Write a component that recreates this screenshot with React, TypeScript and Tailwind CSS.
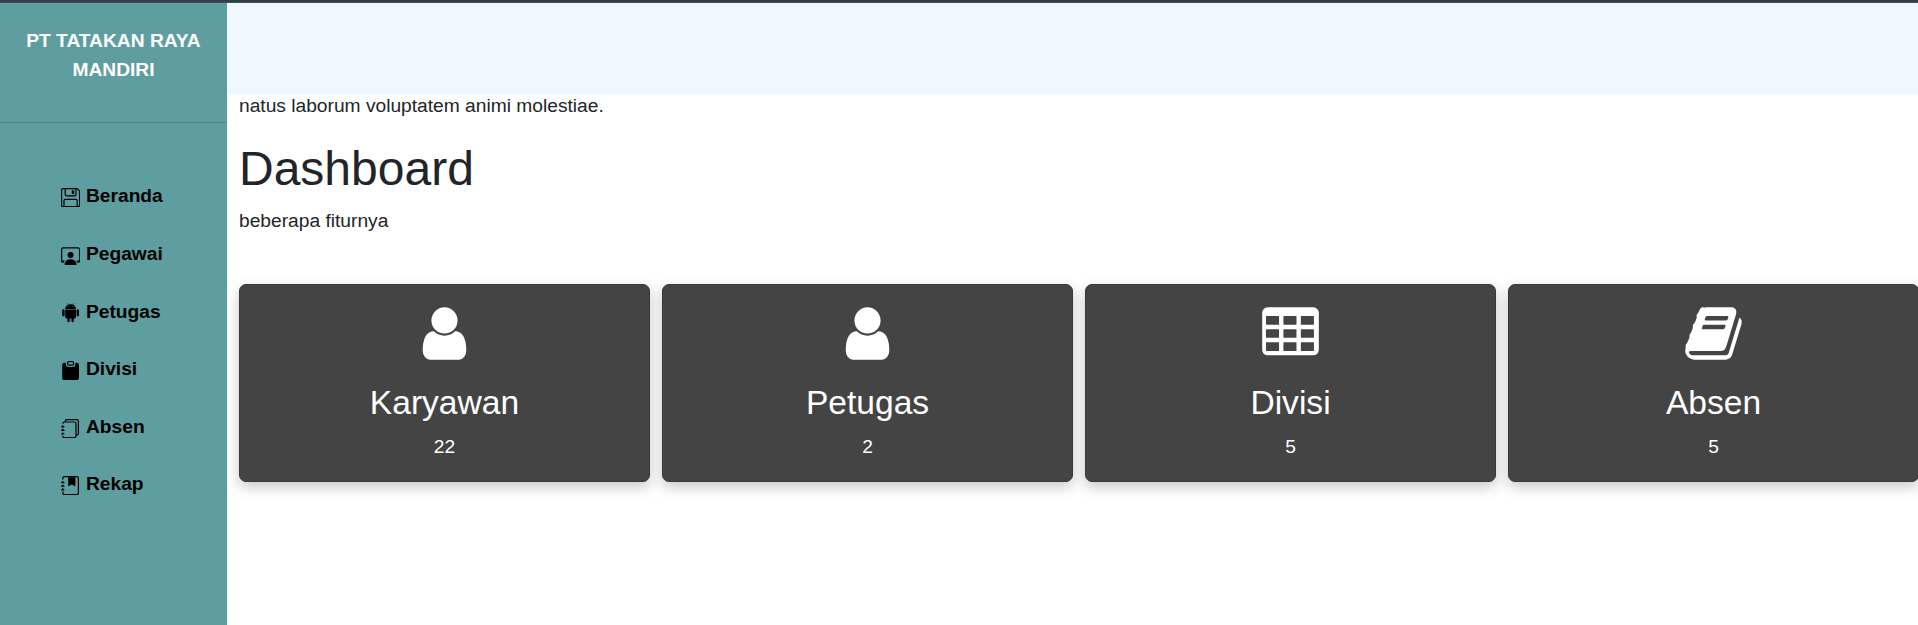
import type { ReactNode } from "react";
import {
  BsAndroid2,
  BsClipboardFill,
  BsFloppy,
  BsJournalBookmarkFill,
  BsJournals,
  BsPersonWorkspace,
} from "react-icons/bs";

const navItems = [
  { label: "Beranda", Icon: BsFloppy },
  { label: "Pegawai", Icon: BsPersonWorkspace },
  { label: "Petugas", Icon: BsAndroid2 },
  { label: "Divisi", Icon: BsClipboardFill },
  { label: "Absen", Icon: BsJournals },
  { label: "Rekap", Icon: BsJournalBookmarkFill },
];

function Glyph({ children }: { children: ReactNode }) {
  return (
    <svg viewBox="0 0 1792 1792" className="size-[61px] shrink-0 fill-white" aria-hidden="true">
      {children}
    </svg>
  );
}

function UserGlyph() {
  return (
    <Glyph>
      <path d="M1536 1399q0 109-62.5 187t-150.5 78h-854q-88 0-150.5-78t-62.5-187q0-85 8.5-160.5t31.5-152 58.5-131 94-89 134.5-34.5q131 128 313 128t313-128q76 0 134.5 34.5t94 89 58.5 131 31.5 152 8.5 160.5zm-256-887q0 159-112.5 271.5t-271.5 112.5-271.5-112.5-112.5-271.5 112.5-271.5 271.5-112.5 271.5 112.5 112.5 271.5z" />
    </Glyph>
  );
}

function TableGlyph() {
  const cell = "h352q16 0 16 16v224q0 16-16 16h-352q-16 0-16-16v-224q0-16 16-16z";
  const cells = [384, 768, 1152].flatMap((y) => [208, 720, 1232].map((x) => `M${x} ${y}${cell}`)).join("");
  return (
    <Glyph>
      <path
        fillRule="evenodd"
        d={`M1744 288v1088q0 66-47 113t-113 47h-1344q-66 0-113-47t-47-113v-1088q0-66 47-113t113-47h1344q66 0 113 47t47 113z${cells}`}
        transform="translate(-16 0)"
      />
    </Glyph>
  );
}

function BookGlyph() {
  return (
    <Glyph>
      <path d="M1703 478q40 57 18 129l-275 906q-19 64-76.5 107.5t-122.5 43.5h-923q-77 0-148.5-53.5t-99.5-131.5q-24-67-2-127 0-4 3-27t4-37q1-8-3-21.5t-3-19.5q2-11 8-21t16.5-23.5 16.5-23.5q23-38 45-91.5t30-91.5q3-10 .5-30t-.5-28q3-11 17-28t17-23q21-36 42-92t25-90q1-9-2.5-32t.5-28q4-13 22-30.5t22-22.5q19-26 42.5-84.5t27.5-96.5q1-8-3-25.5t-2-26.5q2-8 9-18t18-23 17-21q8-12 16.5-30.5t15-35 16-36 19.5-32 26.5-23.5 36-11.5 47.5 5.5l-1 3q38-9 51-9h761q74 0 114 56t18 130l-274 906q-36 119-71.5 153.5t-128.5 34.5h-869q-27 0-38 15-11 16-1 43 24 70 144 70h923q29 0 56-15.5t35-41.5l300-987q7-22 5-57 38 15 59 43zm-1064 2q-4 13 2 22.5t20 9.5h608q13 0 25.5-9.5t16.5-22.5l21-64q4-13-2-22.5t-20-9.5h-608q-13 0-25.5 9.5t-16.5 22.5zm-83 256q-4 13 2 22.5t20 9.5h608q13 0 25.5-9.5t16.5-22.5l21-64q4-13-2-22.5t-20-9.5h-608q-13 0-25.5 9.5t-16.5 22.5z" />
    </Glyph>
  );
}

const stats = [
  { label: "Karyawan", value: 22, icon: <UserGlyph /> },
  { label: "Petugas", value: 2, icon: <UserGlyph /> },
  { label: "Divisi", value: 5, icon: <TableGlyph /> },
  { label: "Absen", value: 5, icon: <BookGlyph /> },
];

export default function App() {
  return (
    <div className="flex h-[625px] w-full flex-col overflow-hidden bg-white font-['Liberation_Sans',Arial,sans-serif] text-[19.2px] leading-[28.8px] text-[#212529]">
      <div className="h-[3px] shrink-0 border-b border-[#484c50] bg-[#2f3f4a]" />
      <div className="flex min-h-0 flex-1">
        <aside className="w-[227px] shrink-0 bg-[#5f9ea0]">
          <div className="h-[120px] border-b border-[#4f8385] px-5 pt-6 text-center font-bold text-white">
            PT TATAKAN RAYA MANDIRI
          </div>
          <nav className="flex flex-col pt-[45px] pl-[61px] font-bold text-black">
            {navItems.map(({ label, Icon }) => (
              <a key={label} className="flex h-[57.6px] items-center gap-[5.8px]">
                <Icon className="mt-[2px] size-[19.2px]" />
                <span>{label}</span>
              </a>
            ))}
          </nav>
        </aside>
        <main className="min-w-0 flex-1">
          <div className="h-[91px] bg-[#f0f8ff]" />
          <div className="pl-3">
            <p className="-mt-[2px]">natus laborum voluptatem animi molestiae.</p>
            <h1 className="mt-[19px] text-[48px] leading-[57.6px]">Dashboard</h1>
            <p className="mt-[9.6px]">beberapa fiturnya</p>
            <div className="mt-12 grid w-[1680px] grid-cols-4 gap-3">
              {stats.map(({ label, value, icon }) => (
                <section
                  key={label}
                  className="flex h-[198px] flex-col items-center rounded-[7px] border border-[#393939] bg-[#444] pt-[18px] text-white shadow-[0_5px_14px_rgba(0,0,0,0.22)]"
                >
                  {icon}
                  <h3 className="mt-[19px] text-[33.6px] leading-[40.3px]">{label}</h3>
                  <p className="mt-[9.7px]">{value}</p>
                </section>
              ))}
            </div>
          </div>
        </main>
      </div>
    </div>
  );
}
